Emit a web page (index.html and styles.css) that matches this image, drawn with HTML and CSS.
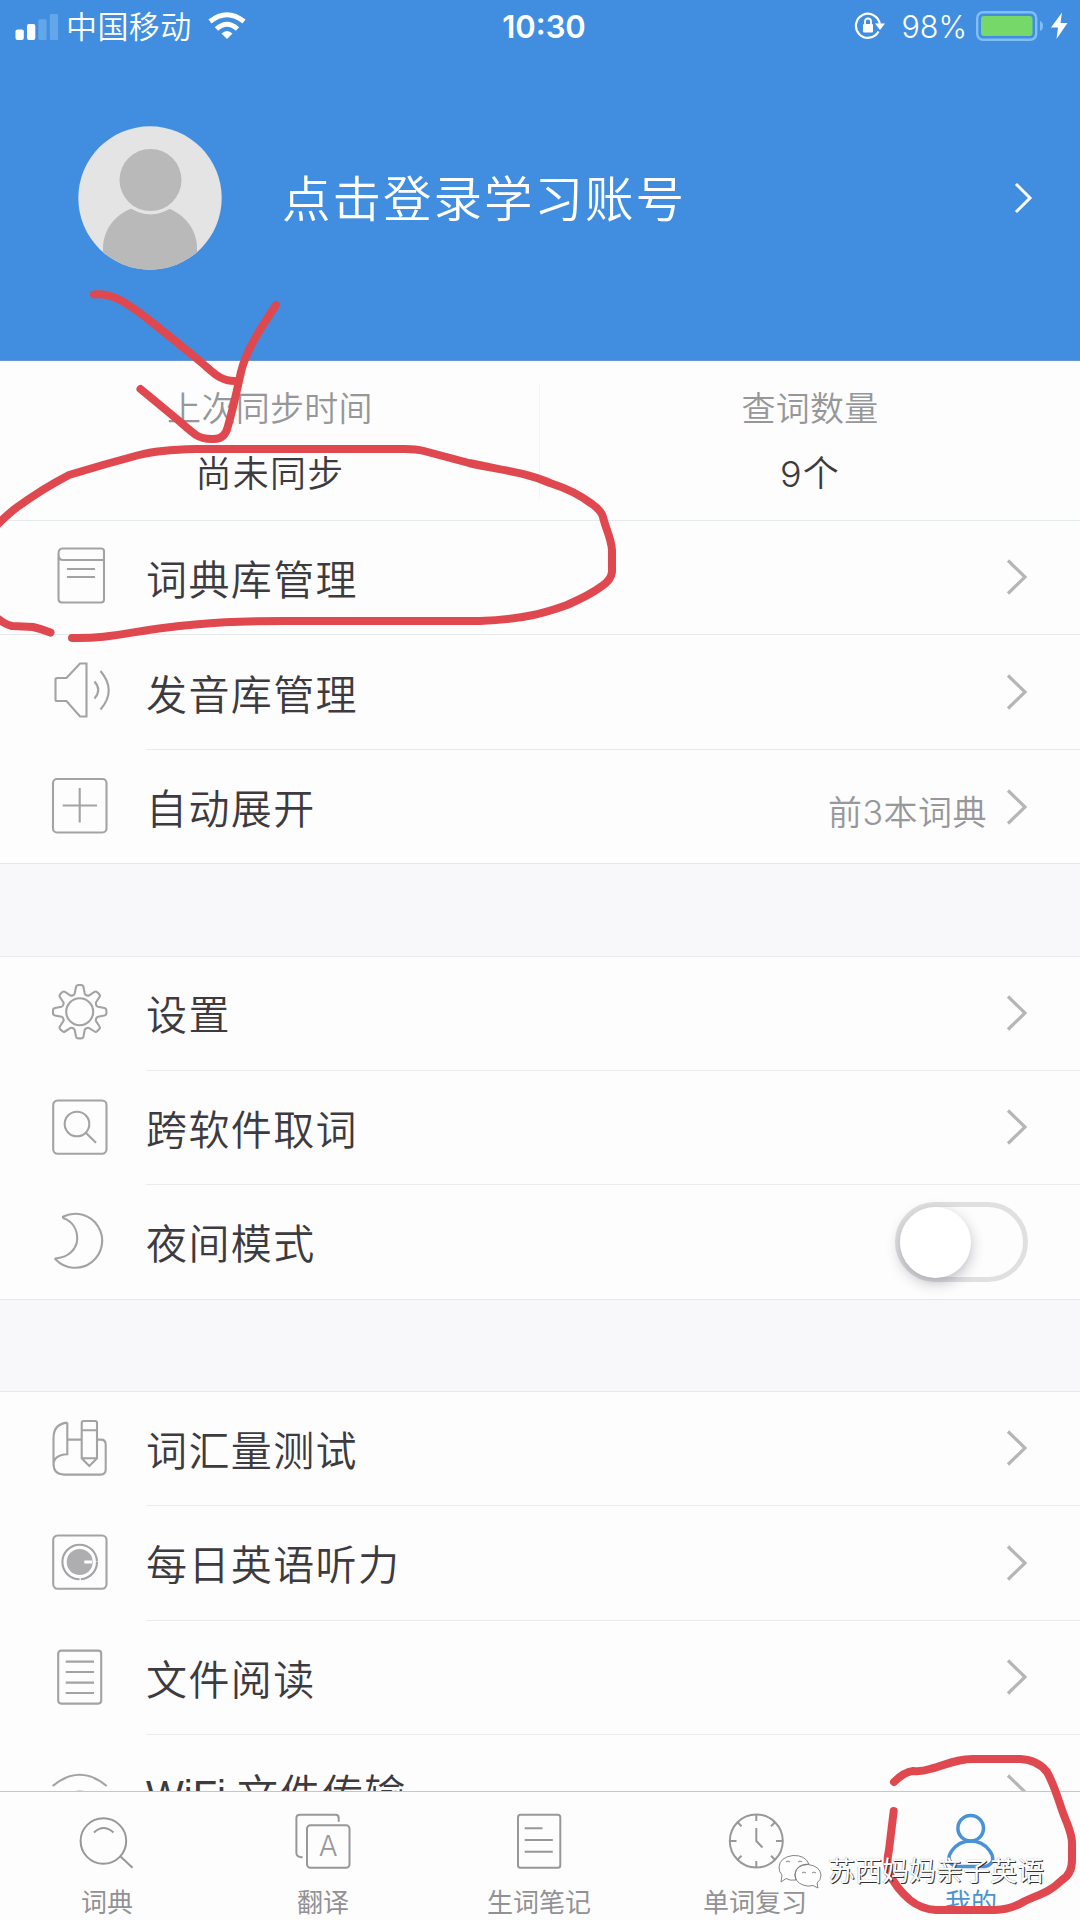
FILE: index.html
```html
<!DOCTYPE html>
<html lang="zh-CN">
<head>
<meta charset="utf-8">
<title>我的</title>
<link rel="stylesheet" href="styles.css">
</head>
<body>
<div class="screen">
  <header class="header">
    <div class="status">
      <div class="status-left">
        <svg class="signal" width="44" height="28" viewBox="0 0 44 28"><g fill="#fff"><rect x="0.5" y="16.5" width="8.3" height="10.5" rx="2"/><rect x="12" y="11" width="8.3" height="16" rx="2"/></g><g fill="#62a7ea"><rect x="23.3" y="6.3" width="8.3" height="20.7" rx="1.5"/><rect x="34.8" y="1" width="8.3" height="26" rx="1.5"/></g></svg>
        <span class="carrier">中国移动</span>
        <svg class="wifi" width="38" height="28" viewBox="0 0 38 28"><g fill="none" stroke="#fff" stroke-width="5"><path d="M2 9.5Q19-4 36 9.5"/><path d="M8.5 17Q19 7.500 29.500 17"/></g><path d="M19 27L13.500 21.500Q19 16.500 24.500 21.500Z" fill="#fff"/></svg>
      </div>
      <span class="clock">10:30</span>
      <div class="status-right">
        <svg width="32" height="30" viewBox="0 0 32 30"><path d="M24.500 20.500A12 12 0 1 1 25.800 13" fill="none" stroke="#fff" stroke-width="2.200"/><path d="M21 12.500H31L26 19Z" fill="#fff"/><rect x="9" y="13" width="10" height="8.500" rx="1" fill="#fff"/><path d="M11 13.500V10.500Q11 7.500 14 7.500T17 10.500V13.500" fill="none" stroke="#fff" stroke-width="1.800"/></svg>
        <span class="percent">98%</span>
        <svg class="battery" width="94" height="30" viewBox="0 0 94 30"><rect x="1.200" y="1.200" width="59" height="27.600" rx="6" fill="none" stroke="#83bdf5" stroke-width="2.400"/><rect x="5" y="5" width="51.500" height="20" rx="3" fill="#75d868"/><path d="M64 10Q67 11 67 15T64 20Z" fill="#83bdf5"/><path d="M86 1.500L75 16.500H82L80.500 28L91.500 12H84.500Z" fill="#fff"/></svg>
      </div>
    </div>
    <div class="login">
      <svg class="avatar" width="144" height="144" viewBox="0 0 144 144"><defs><clipPath id="face"><circle cx="72" cy="72" r="71.700"/></clipPath></defs><g clip-path="url(#face)"><rect width="144" height="144" fill="#e4e4e5"/><path d="M25 144V122A47 43 0 0 1 119 122V144Z" fill="#b9b9ba"/><circle cx="72.500" cy="54" r="34.500" fill="#e4e4e5"/><circle cx="72.500" cy="54" r="31" fill="#b9b9ba"/></g></svg>
      <span class="login-text">点击登录学习账号</span>
      <svg width="20" height="34" viewBox="0 0 20 34"><path d="M3 3L17 17L3 31" class="chev-white"/></svg>
    </div>
  </header>

  <main class="content">
    <section class="stats">
      <div class="stat"><span class="stat-label">上次同步时间</span><span class="stat-value">尚未同步</span></div>
      <div class="stat"><span class="stat-label">查词数量</span><span class="stat-value">9个</span></div>
    </section>

    <section class="group first">
      <div class="row full">
        <svg class="icon" viewBox="0 0 60 60"><path d="M13 1.500H51Q54 1.500 54 4V13H13Q8.500 13 8.500 7T13 1.500ZM8.500 7V51.500Q8.500 55.500 12 55.500H51Q54 55.500 54 52.500V13M17 22H45M17 30H45"/></svg>
        <div class="body"><span class="label">词典库管理</span><svg class="chev" viewBox="0 0 22 40"><path d="M2 3.500L19 20L2 36.500"/></svg></div>
      </div>
      <div class="row">
        <svg class="icon" viewBox="0 0 60 60"><path transform="translate(0 -1.500)" d="M7 16.500H16.500L30 2H36.500V55H30L16.500 39.500H7Q5.500 39.500 5.500 38V18Q5.500 16.500 7 16.500ZM44.500 20Q52 28.500 44.500 37M50.500 9.500Q67 29 50.500 48"/></svg>
        <div class="body"><span class="label">发音库管理</span><svg class="chev" viewBox="0 0 22 40"><path d="M2 3.500L19 20L2 36.500"/></svg></div>
      </div>
      <div class="row last">
        <svg class="icon" viewBox="0 0 60 60"><rect x="3" y="2" width="53.500" height="53.500" rx="4"/><path d="M12.700 28.500H47M29.700 11V45.500"/></svg>
        <div class="body"><span class="label">自动展开</span><span class="value">前3本词典</span><svg class="chev" viewBox="0 0 22 40"><path d="M2 3.500L19 20L2 36.500"/></svg></div>
      </div>
    </section>

    <section class="group">
      <div class="row">
        <svg class="icon" viewBox="0 0 60 60"><circle cx="29.700" cy="28.700" r="13.500"/><path d="M24.700 10.500L26 4Q26.500 2 28.500 2H31Q33 2 33.500 4L34.700 10.500Q35 11.700 36.500 12.200Q38.200 13 39.200 12.300L44.500 8.900Q46 8 47.300 9.300L49.100 11.100Q50.500 12.500 49.500 14L46.100 19.200Q45.500 20.200 46.200 22Q46.800 23.400 48 23.700L54.400 25Q56.400 25.500 56.400 27.500V30Q56.400 32 54.400 32.500L48 33.700Q46.800 34 46.200 35.500Q45.500 37.200 46.100 38.200L49.500 43.500Q50.500 45 49.100 46.300L47.300 48.100Q46 49.500 44.500 48.500L39.200 45.100Q38.200 44.500 36.500 45.200Q35 45.800 34.700 47L33.500 53.400Q33 55.400 31 55.400H28.500Q26.500 55.400 26 53.400L24.700 47Q24.400 45.800 23 45.200Q21.200 44.500 20.200 45.100L15 48.500Q13.500 49.500 12.100 48.100L10.300 46.300Q9 45 9.900 43.500L13.300 38.200Q14 37.200 13.200 35.500Q12.700 34 11.500 33.700L5 32.500Q3 32 3 30V27.500Q3 25.500 5 25L11.500 23.700Q12.700 23.400 13.200 22Q14 20.200 13.300 19.200L9.900 14Q9 12.500 10.300 11.100L12.100 9.300Q13.500 8 15 8.900L20.200 12.300Q21.200 13 23 12.200Q24.400 11.700 24.700 10.500Z"/></svg>
        <div class="body"><span class="label">设置</span><svg class="chev" viewBox="0 0 22 40"><path d="M2 3.500L19 20L2 36.500"/></svg></div>
      </div>
      <div class="row">
        <svg class="icon" viewBox="0 0 60 60"><rect x="3.200" y="2.500" width="53.300" height="53.300" rx="4.500"/><circle cx="27" cy="26" r="12.300"/><path d="M35.800 34.800L46 44.800"/></svg>
        <div class="body"><span class="label">跨软件取词</span><svg class="chev" viewBox="0 0 22 40"><path d="M2 3.500L19 20L2 36.500"/></svg></div>
      </div>
      <div class="row last">
        <svg class="icon" viewBox="0 0 60 60"><path transform="translate(-0.800 0)" d="M14.200 4.500A27 27 0 1 1 6.500 47.500Q5 46.300 7.500 46.200C19 45.500 28 37 28 26.500C28 17 23 9.500 14.500 6.300Q13 5.200 14.200 4.500Z"/></svg>
        <div class="body"><span class="label">夜间模式</span><span class="switch"><i class="knob"></i></span></div>
      </div>
    </section>

    <section class="group">
      <div class="row">
        <svg class="icon" viewBox="0 0 60 60"><path d="M17.300 3.600V35.300Q3.500 36 3.500 46M17.300 3.600Q3.500 5 3.500 19V44.600Q3.500 55.600 14 55.600H50.500Q55.700 55.600 55.700 50.500V25.500Q55.700 20.600 51 20.600H47M17.300 20.600H31.700M33.500 2H45.200Q47 2 47 4V39.300L39.300 47L31.700 39.300V4Q31.700 2 33.500 2ZM31.700 11.300H47M31.700 39.300H47"/></svg>
        <div class="body"><span class="label">词汇量测试</span><svg class="chev" viewBox="0 0 22 40"><path d="M2 3.500L19 20L2 36.500"/></svg></div>
      </div>
      <div class="row">
        <svg class="icon" viewBox="0 0 60 60"><rect x="3.200" y="2.500" width="53.300" height="53.300" rx="4.500"/><circle cx="29.700" cy="29" r="17.300" stroke-dasharray="25.800 1.400 80.200 1.300"/><circle cx="29.700" cy="29" r="13" class="solid"/><path d="M34.300 29H42" class="notch"/></svg>
        <div class="body"><span class="label">每日英语听力</span><svg class="chev" viewBox="0 0 22 40"><path d="M2 3.500L19 20L2 36.500"/></svg></div>
      </div>
      <div class="row">
        <svg class="icon" viewBox="0 0 60 60"><rect x="8.200" y="2.600" width="43" height="53" rx="3"/><path d="M15.700 13.600H44M15.700 24H44M15.700 34.600H44M15.700 45H44"/></svg>
        <div class="body"><span class="label">文件阅读</span><svg class="chev" viewBox="0 0 22 40"><path d="M2 3.500L19 20L2 36.500"/></svg></div>
      </div>
      <div class="row last">
        <svg class="icon" viewBox="0 0 60 60"><path d="M2.700 24Q29.700 1.500 56.700 24M12 37Q29.700 22 47.500 37"/></svg>
        <div class="body"><span class="label"><span class="latin">WiFi </span>文件传输</span><svg class="chev" viewBox="0 0 22 40"><path d="M2 3.500L19 20L2 36.500"/></svg></div>
      </div>
    </section>
  </main>

  <nav class="tabs">
    <div class="tab"><svg class="tab-icon" viewBox="0 0 60 60"><circle cx="26.400" cy="31" r="22.800"/><path d="M17 22.500Q26.400 13.500 36.500 22.500M43 46L55.500 57.700"/></svg><span>词典</span></div>
    <div class="tab"><svg class="tab-icon" viewBox="0 0 60 60"><path d="M9.700 47.300H8Q3.400 46.500 3.400 43V8Q3.400 4.700 7 4.700H42.500Q45.700 4.700 45.700 8V11.700"/><rect x="14" y="15.300" width="42.500" height="42.400" rx="3.500"/><text x="35.300" y="46" text-anchor="middle" class="letter">A</text></svg><span>翻译</span></div>
    <div class="tab"><svg class="tab-icon" viewBox="0 0 60 60"><rect x="9" y="4.700" width="42.300" height="53" rx="2.500"/><path d="M15.700 18.300H33.500M15.700 30H43.800M15.700 41.700H43.800"/></svg><span>生词笔记</span></div>
    <div class="tab"><svg class="tab-icon" viewBox="0 0 60 60"><circle cx="31.300" cy="31" r="26.500"/><path d="M31.300 18V31L37.500 37.500M31.300 4.500V11M31.300 51V57.500M4.800 31H11.500M51 31H57.800M12.600 12.300L16.500 16.200M46 45.700L50 49.700M12.600 49.700L16.500 45.700M46 16.200L50 12.300"/></svg><span>单词复习</span></div>
    <div class="tab active"><svg class="tab-icon" viewBox="0 0 60 60"><circle cx="29.700" cy="18.300" r="12.800"/><path d="M8 50Q7.500 45 11 40.500Q18 31 29.700 31T48.500 40.500Q52 45 51.800 50Q50.500 55 44 56.500H16Q9 55 8 50Z"/></svg><span>我的</span></div>
  </nav>

  <svg class="marks" width="1080" height="1920" viewBox="0 0 1080 1920">
    <path d="M94 294.500C112 293 125 301 151 321.500S190 353 202 363S220 381 235 381"/>
    <path d="M276 305C262 326 246 350 241 372S234 405 228 426Q225 440 212 439Q202 439 196 435Q188 429 178 420L140.500 389"/>
    <path d="M72 638C105 639 130 632 163 628C210 622 240 621 286 621H480C525 619 545 613 567 605Q590 595 602 586Q611 580 612 572V550C611 537 606 530 603 517Q601 510 592 504Q575 491 550 483C525 472 500 470 469 463L424 451Q416 449 405 449H196Q158 450 139 455Q105 464 69 475Q42 489 16 508Q8 514-3 525"/>
    <path d="M-4 617Q4 624 12 626L33 627Q42 629 50.500 632.500"/>
    <path d="M894 1782Q904 1772 913 1771Q921 1772 930 1769C948 1764 957 1759 973 1759H1020Q1038 1760 1047 1772C1057 1790 1059 1805 1067 1823Q1072 1836 1072 1843V1860Q1072 1874 1062 1880C1050 1892 1040 1894 1025 1901Q1010 1910 995 1910H936Q921 1909 910 1900Q896 1888 889 1873Q886 1863 889 1850L893.700 1811"/>
  </svg>

  <div class="watermark">
    <svg width="46" height="36" viewBox="0 0 46 36"><path d="M18 26Q12 27 8 24.500L3 28L4 21Q1 18 1 13Q2 3 15 1.500Q27 1 31 10Q18 10 17 20Q17 23 18 26ZM25 31Q17 28 17 20.500Q18 11 30 10.500Q42 12 43 21Q43 26 39 29L40 34L35 31.500Q30 33 25 31Z"/><path d="M8 8q2-2 4 0M20 8q2-2 4 0M24 19q2-2 4 0M34 19q2-2 4 0"/></svg>
    <span>苏西妈妈亲子英语</span>
  </div>
</div>
</body>
</html>
```
FILE: styles.css
```css
* { box-sizing: border-box; }

body {
  margin: 0;
  font-family: "Inter", "Noto Sans CJK SC", sans-serif;
  font-weight: 350;
  color: #3d3b3f;
}

.screen {
  position: relative;
  width: 1080px;
  height: 1920px;
  overflow: hidden;
  display: flex;
  flex-direction: column;
  background: #fdfdfd;
}

/* Header */
.header {
  flex: none;
  height: 361px;
  background: #418ee0;
  border-bottom: 1px solid #6598cd;
  color: #fff;
}

.status {
  height: 53px;
  display: grid;
  grid-template-columns: 1fr auto 1fr;
  align-items: center;
  padding: 0 10px 0 15px;
}

.status-left, .status-right { display: flex; align-items: center; }
.status-right { justify-content: flex-end; }
.carrier { margin-left: 7px; font-size: 31px; letter-spacing: 0.4px; line-height: 53px; }
.wifi { margin-left: 16px; margin-top: -2px; }
.clock { font-size: 31px; font-weight: 600; line-height: 53px; padding-left: 3px; }
.percent { margin-left: 15px; font-size: 30.5px; line-height: 53px; }
.status-right svg { margin-top: -1px; }
.battery { margin-left: 9px; }

.login {
  display: flex;
  align-items: center;
  height: 290px;
  padding: 0 47px 0 78px;
}

.login-text {
  flex: 1;
  margin-left: 60px;
  margin-top: -5px;
  font-size: 48.5px;
  letter-spacing: 2px;
}

.chev-white { fill: none; stroke: #fff; stroke-width: 3; }

/* Content list */
.content {
  flex: 1;
  min-height: 0;
  overflow: hidden;
  background: #f8f7fa;
}

.stats {
  height: 160px;
  padding: 39px 0;
  display: grid;
  grid-template-columns: 1fr 1fr;
  background: #fdfdfd;
  border-bottom: 1px solid #e5ebea;
}

.stat {
  display: flex;
  flex-direction: column;
  align-items: center;
  margin-top: -16px;
}

.stat + .stat { box-shadow: -1px 0 0 #f1f5f4; }
.stat-label { font-size: 34px; line-height: 50px; letter-spacing: 0.3px; color: #97979a; }
.stat-value { font-size: 36px; line-height: 50px; letter-spacing: 1.2px; margin-top: 15px; }

.group {
  background: #fdfdfd;
  box-shadow: inset 0 1px 0 #e9e9ec;
  margin-bottom: 91.6px;
}

.group.first { box-shadow: none; margin-top: -0.4px; }

.row {
  height: 114.6px;
  display: flex;
  padding-left: 50px;
}

.row.full, .row.last { border-bottom: 1px solid #e6e7e9; }
.icon {
  width: 60px;
  height: 60px;
  flex: none;
  align-self: center;
  overflow: visible;
  fill: none;
  stroke: #a3a3a5;
  stroke-width: 2.1;
}

.icon .solid { fill: #aeaeb0; stroke: none; }
.icon .notch { stroke: #fff; stroke-width: 3; }

.body {
  flex: 1;
  margin-left: 36px;
  padding-right: 52px;
  display: flex;
  align-items: center;
  border-bottom: 1px solid #ebebed;
}

.row.full .body, .row.last .body { border-bottom: 0; }

.label {
  flex: 1;
  font-size: 41px;
  letter-spacing: 1.4px;
  line-height: 60px;
  padding-top: 5px;
}

.latin { letter-spacing: 0; font-size: 40px; font-family: "Liberation Sans", sans-serif; }

.value { font-size: 34px; color: #98989b; letter-spacing: 0.5px; padding-top: 7px; margin-right: 19px; }

.chev {
  width: 22px;
  height: 40px;
  fill: none;
  stroke: #b6b6b9;
  stroke-width: 3.2;
}

.switch {
  width: 133px;
  height: 80px;
  border: 5px solid #e0e0e1;
  border-radius: 40px;
  display: flex;
}

.knob {
  width: 71px;
  height: 71px;
  border-radius: 50%;
  background: #fff;
  box-shadow: 0 5px 14px rgba(60, 50, 70, 0.32);
}

/* Tab bar */
.tabs {
  flex: none;
  height: 129px;
  display: grid;
  grid-template-columns: repeat(5, 1fr);
  border-top: 1px solid #c6c6c9;
  padding-right: 1px;
  margin-left: -1px;
  background: #fdfdfd;
}

.tab {
  display: flex;
  flex-direction: column;
  align-items: center;
  padding-top: 18px;
  font-size: 26px;
  line-height: 38px;
  font-weight: 400;
  color: #929295;
}

.tab span { margin-top: 14px; }
.tab-icon { width: 60px; height: 60px; flex: none; fill: none; stroke: #98989b; stroke-width: 2; }
.tab-icon .letter { font-size: 28px; font-weight: 300; fill: #98989b; stroke: none; }
.tab.active { color: #4a93cf; }
.tab.active .tab-icon { stroke: #4a92d8; stroke-width: 3.5; }

/* Hand-drawn annotation */
.marks {
  position: absolute;
  inset: 0;
  fill: none;
  stroke: #e0484f;
  stroke-width: 8;
  stroke-linecap: round;
  stroke-linejoin: round;
}

.watermark {
  position: absolute;
  left: 778px;
  top: 1853px;
  display: flex;
  align-items: center;
  gap: 4px;
  font-size: 27px;
  line-height: 38px;
  font-weight: 400;
  color: #fff;
  white-space: nowrap;
  text-shadow: 1px 1px 0.5px #333, 0 0 1px #777;
}

.watermark svg { fill: #fff; stroke: #77777a; stroke-width: 0.9; }
```
